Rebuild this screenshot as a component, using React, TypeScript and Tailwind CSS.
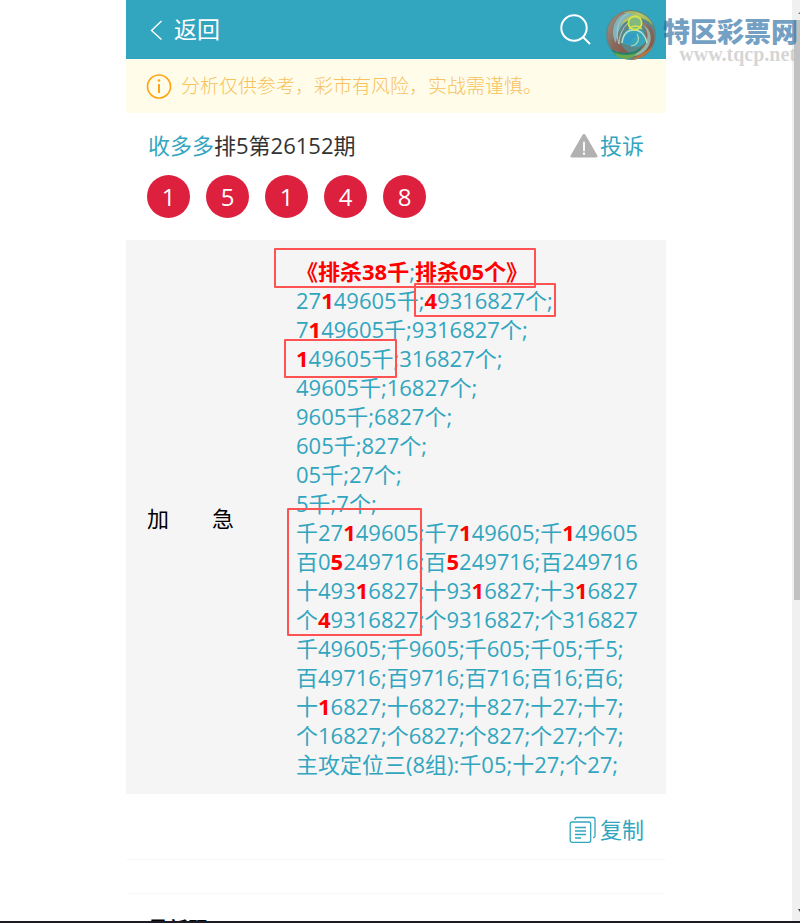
import React from 'react';

interface Box {
    id: string;
    className: string;
}

const balls = [1, 5, 1, 4, 8];

// Hits are wrapped in asterisks
const lines = [
    '27*1*49605千;*4*9316827个;',
    '7*1*49605千;9316827个;',
    '*1*49605千;316827个;',
    '49605千;16827个;',
    '9605千;6827个;',
    '605千;827个;',
    '05千;27个;',
    '5千;7个;',
    '千27*1*49605;千7*1*49605;千*1*49605',
    '百0*5*249716;百*5*249716;百249716',
    '十493*1*6827;十93*1*6827;十3*1*6827',
    '个*4*9316827;个9316827;个316827',
    '千49605;千9605;千605;千05;千5;',
    '百49716;百9716;百716;百16;百6;',
    '十*1*6827;十6827;十827;十27;十7;',
    '个16827;个6827;个827;个27;个7;',
    '主攻定位三(8组):千05;十27;个27;',
];

const boxes: Box[] = [
    { id: 'title', className: '-left-[22px] -top-[9px] w-[262px] h-[40px]' },
    { id: 'unit', className: 'left-[118px] top-[26px] w-[142px] h-[34px]' },
    { id: 'thousand', className: '-left-[12px] top-[82px] w-[113px] h-[39px]' },
    { id: 'groups', className: '-left-[9px] top-[251px] w-[135px] h-[128px]' },
];

const Line: React.FC<{ text: string }> = ({ text }) => (
    <p className="whitespace-nowrap">
        {text.split('*').map((part, i) =>
            i % 2 === 1 ? <b key={i} className="font-bold text-[#ff0000]">{part}</b> : part
        )}
    </p>
);

const Watermark: React.FC = () => (
    <div className="absolute right-0 top-0 z-10 flex items-start pr-[2px] pt-[9px] pointer-events-none">
        <svg className="h-[52px] w-[52px]" viewBox="0 0 52 52" fill="none">
            <defs>
                <linearGradient id="rim" x1="0" y1="0" x2="1" y2="1">
                    <stop offset="0" stopColor="#a39a88" />
                    <stop offset="0.5" stopColor="#86695f" />
                    <stop offset="1" stopColor="#8d4f3d" />
                </linearGradient>
                <linearGradient id="gold" x1="0" y1="0" x2="1" y2="1">
                    <stop offset="0" stopColor="#86a874" />
                    <stop offset="0.4" stopColor="#b6c665" />
                    <stop offset="1" stopColor="#94ab58" />
                </linearGradient>
            </defs>
            <circle cx="26" cy="26" r="25" fill="#5d8686" />
            <path d="M26 1C8 1-4 22 6 39c7 8 14 9 22 7C12 39 6 20 26 1Z" fill="url(#rim)" />
            <path d="M21 4C8 8 5 25 11 34 13 20 18 10 34 6c-4-3-9-3-13-2Z" fill="#7eb5bf" />
            <path d="M24 4C12 10 10 23 14 35c0-12 7-23 21-28" stroke="#b9cbc2" />
            <path d="M18 4C29-2 46 7 48 17c-7-9-19-12-32-1 2-6 7-9 13-10-5-2-9-2-11-2Z" fill="url(#gold)" />
            <path d="M33 13c12 0 18 9 16 19C45 46 29 52 17 46c14 0 24-8 24-20 0-5-2-10-8-13Z" fill="url(#rim)" />
            <path d="M37 15c8 7 7 19-1 26-7 6-18 6-26 0 8 8 21 9 30 1 9-9 7-22-3-27Z" fill="#8eb5a7" />
            <path d="M6 40c10 6 24 5 31-3-3 9-15 13-27 9l-4-6Z" fill="#24826b" />
            <path d="M8 43c9 4 18 4 25 0-4 6-12 9-20 5l-5-5Z" fill="#68a94d" />
            <path d="M26 51c9-1 18-6 22-14-6 6-14 9-22 14Z" fill="#bb743e" />
            <path d="M17 34c0-13 8-16 15-15 6 1 10 7 8 15-4 4-9 5-14 3l-9-3Z" fill="#3aa5b9" />
            <path d="M18 33c2-8 10-11 19-6-6-1-10 1-12 8l-7-2Z" fill="#319cc6" />
            <path d="M17 34c1-9 5-13 12-13s12 6 13 13" stroke="#c2dfc9" strokeWidth="1.4" />
            <path d="M26 37c7-1 9-7 6-12" stroke="#add8bb" strokeWidth="1.2" />
            <circle cx="30" cy="14" r="6.7" fill="#83b97e" stroke="#d7e64b" strokeWidth="1.7" />
            <path d="M24 20c4-4 9-4 13 0" stroke="#d9e74b" strokeWidth="1.6" />
        </svg>
        <div className="flex flex-col items-end pl-[6px]">
            <span className="font-['Noto_Sans_CJK_SC',sans-serif] text-[27px] leading-[34px] pt-[5px] font-black text-[#2068a0]/65">特区彩票网</span>
            <span className="-mt-[5px] pr-[2px] font-['Liberation_Serif',serif] text-[20px] leading-[22px] font-bold text-[#b9b9b9]/60">www.tqcp.net</span>
        </div>
    </div>
);

const App: React.FC = () => {
    return (
        <div className="relative flex h-screen flex-col overflow-hidden bg-white font-['Open_Sans','Noto_Sans_CJK_SC',sans-serif] text-[22px] leading-[29px] text-[#333333]">
            <div className="flex min-h-0 flex-1">
                <main className="min-w-0 flex-1 overflow-hidden">
                    <div className="mx-auto max-w-[540px]">
                        <header className="flex h-[59px] items-center justify-between bg-[#32a5bf] pl-6 pr-[75px] text-white">
                            <a href="#back" className="flex items-center gap-3 text-[23px]">
                                <svg className="h-5 w-3" viewBox="0 0 12 20" fill="none" stroke="currentColor" strokeWidth="1.4">
                                    <path d="M11.5 1 1.5 10.5l10 9" />
                                </svg>
                                返回
                            </a>
                            <button aria-label="搜索">
                                <svg className="h-8 w-8" viewBox="0 0 32 32" fill="none" stroke="currentColor" strokeWidth="2">
                                    <circle cx="15" cy="14" r="12.7" />
                                    <path d="m24 23 7 7" />
                                </svg>
                            </button>
                        </header>

                        <div className="flex h-[54px] items-center gap-2 bg-[#fffdea] pl-5 text-[19px] text-[#f7c15d]">
                            <svg className="h-[27px] w-[27px]" viewBox="0 0 27 27" fill="none" stroke="#ffa517" strokeWidth="1.7">
                                <circle cx="13" cy="13.5" r="11.5" />
                                <path d="M13 11v9" strokeWidth="2" />
                                <circle cx="13" cy="7.5" r="1.3" fill="#ffa517" stroke="none" />
                            </svg>
                            <p className="font-light">分析仅供参考，彩市有风险，实战需谨慎。</p>
                        </div>

                        <section className="px-[22px] pt-[18px] pb-[22px]">
                            <div className="flex items-center justify-between">
                                <h1><a href="#author" className="text-[#32a5bf]">收多多</a>排5第26152期</h1>
                                <a href="#complain" className="flex items-center gap-[2px] text-[#32a5bf]">
                                    <svg className="h-[26px] w-7" viewBox="0 0 28 26">
                                        <path d="M12.3 2.2q1.7-2.4 3.4 0l11.5 20q1 2.3-1.6 2.3H2.4q-2.6 0-1.6-2.3Z" fill="#b1b1b1" />
                                        <path d="M14 9.5v8" stroke="#fff" strokeWidth="1.8" strokeLinecap="round" />
                                        <circle cx="14" cy="20.7" r="1.2" fill="#fff" />
                                    </svg>
                                    投诉
                                </a>
                            </div>
                            <div className="-ml-px mt-[15px] flex gap-4">
                                {balls.map((n, i) => (
                                    <span key={i} className="flex size-[43px] items-center justify-center rounded-full bg-[#dc203e] text-[24px] text-white">{n}</span>
                                ))}
                            </div>
                        </section>

                        <section className="flex items-center bg-[#f5f5f5] pt-[17px] pb-[15px] pl-[21px] text-[#32a5bf]">
                            <h2 className="flex w-[149px] shrink-0 gap-[43px] text-black">
                                <span>加</span>
                                <span>急</span>
                            </h2>
                            <div className="relative">
                                <p className="whitespace-nowrap font-bold text-[#ff0000]">
                                    《排杀38千<span className="font-normal text-[#32a5bf]">;</span>排杀05个》
                                </p>
                                {lines.map(line => <Line key={line} text={line} />)}
                                {boxes.map(box => (
                                    <span key={box.id} className={`absolute rounded-[1px] border-2 border-[#ff5252] ${box.className}`} />
                                ))}
                            </div>
                        </section>

                        <div className="flex h-[66px] items-center justify-end border-b border-[#f8f8f8] pt-[5px] pr-[22px] text-[#32a5bf]">
                            <button className="flex items-center gap-1">
                                <svg className="h-[27px] w-[27px]" viewBox="0 0 27 27" fill="none" stroke="currentColor" strokeWidth="1.3">
                                    <path d="M6 4V3q0-1.5 1.5-1.5h17Q26 1.500 26 3v17q0 1.500-1.500 1.500H24" />
                                    <rect x="1.200" y="6" width="20.500" height="20.300" rx="2" />
                                    <path d="M6 11.500h11M6 15h11M6 18.500h11M6 22h6" strokeWidth="1.500" />
                                </svg>
                                复制
                            </button>
                        </div>

                        <div className="mt-[33px] border-t border-[#f8f8f8] px-[22px] pt-[21px]">
                            <h2 className="text-[20px] font-bold text-black">最新跟</h2>
                        </div>
                    </div>
                </main>

                {/* scrollbar */}
                <div className="flex w-2 shrink-0 flex-col items-end overflow-hidden bg-[#f0f0f0]">
                    <svg className="h-5 w-[6px] shrink-0" viewBox="0 0 6 20">
                        <path d="M4 14h2v-2Z" fill="#777777" />
                    </svg>
                    <div className="h-[63%] w-[6px] bg-[#c1c1c1]" />
                    <svg className="mt-auto h-5 w-[6px] shrink-0" viewBox="0 0 6 20">
                        <path d="M4 8h2v3Z" fill="#444444" />
                    </svg>
                </div>
            </div>
            <footer className="h-[2px] bg-[#1f1b26]" />
            <Watermark />
        </div>
    );
};

export default App;
